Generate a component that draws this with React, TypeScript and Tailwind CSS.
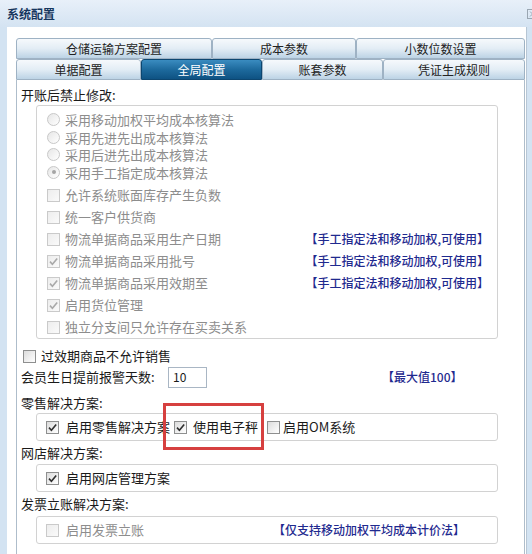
import React from "react";

function Check({ checked = false, disabled = false }: { checked?: boolean; disabled?: boolean }) {
  return (
    <span
      className={
        disabled
          ? "flex h-[13px] w-[13px] shrink-0 items-center justify-center border border-[#cacaca] bg-gradient-to-br from-[#ededed] to-[#fafafa]"
          : "flex h-[13px] w-[13px] shrink-0 items-center justify-center border border-[#8e8f8f] bg-gradient-to-br from-[#dcdcdc] to-white"
      }
    >
      {checked && (
        <svg width="11" height="11" viewBox="0 0 11 11">
          <path
            d="M2 5.6 L4.4 8.2 L9.2 2.4"
            fill="none"
            stroke={disabled ? "#a9a9a9" : "#2f2f2f"}
            strokeWidth="1.6"
          />
        </svg>
      )}
    </span>
  );
}

function Radio({ selected = false }: { selected?: boolean }) {
  return (
    <span className="flex h-[13px] w-[13px] shrink-0 items-center justify-center rounded-full border border-[#c8c8c8] bg-gradient-to-br from-[#e6e6e6] to-white">
      {selected && <span className="h-[4px] w-[4px] rounded-full bg-[#a5a5a5]" />}
    </span>
  );
}

function Tab({ label, w, active = false }: { label: string; w: string; active?: boolean }) {
  return (
    <div
      className={
        active
          ? `${w} flex h-full items-center justify-center rounded-t-[3px] border border-[#0c4670] bg-gradient-to-b from-[#3a8cc0] via-[#1d6a9d] to-[#0e5283] text-white`
          : `${w} flex h-full items-center justify-center rounded-t-[3px] border border-[#9eb2c4] bg-gradient-to-b from-[#f6f9fc] via-[#e3edf5] to-[#bcd3e5] text-[#222]`
      }
    >
      {label}
    </div>
  );
}

const NOTE = "【手工指定法和移动加权,可使用】";

export default function App() {
  const radios = [
    { t: "采用移动加权平均成本核算法", s: false },
    { t: "采用先进先出成本核算法", s: false },
    { t: "采用后进先出成本核算法", s: false },
    { t: "采用手工指定成本核算法", s: true },
  ];
  const checks = [
    { t: "允许系统账面库存产生负数", c: false, n: false },
    { t: "统一客户供货商", c: false, n: false },
    { t: "物流单据商品采用生产日期", c: false, n: true },
    { t: "物流单据商品采用批号", c: true, n: true },
    { t: "物流单据商品采用效期至", c: true, n: true },
    { t: "启用货位管理", c: true, n: false },
    { t: "独立分支间只允许存在买卖关系", c: false, n: false },
  ];

  return (
    <div className="relative h-[554px] w-[532px] overflow-hidden bg-[#d3e3f2] font-['Noto_Sans_CJK_SC','Noto_Sans',sans-serif] text-[13px] text-[#1a1a1a]">
      {/* title bar */}
      <div className="flex h-[27px] items-center bg-gradient-to-b from-[#e8f0f9] to-[#d4e3f2] pl-[7px]">
        <span className="text-[12px] font-bold leading-none text-[#17365d]">系统配置</span>
        <svg className="ml-auto mr-[-6px]" width="11" height="10" viewBox="0 0 11 10">
          <rect x="0.5" y="0.5" width="10" height="9" fill="none" stroke="#9aa6b2" />
          <path d="M3 2.5 L8 7.5 M8 2.5 L3 7.5" stroke="#9aa6b2" strokeWidth="1" />
        </svg>
      </div>

      {/* white panel */}
      <div className="ml-[7px] flex h-[527px] w-[520px] flex-col border-r border-[#b7c6d4] bg-white pl-[9px] pr-[1px] pt-[11px]">
        {/* tabs */}
        <div className="flex h-[21px] text-[12px] leading-none">
          <Tab label="仓储运输方案配置" w="w-[196px]" />
          <Tab label="成本参数" w="w-[144px]" />
          <Tab label="小数位数设置" w="w-[169px]" />
        </div>
        <div className="flex h-[21px] text-[12px] leading-none">
          <Tab label="单据配置" w="w-[125px]" />
          <Tab label="全局配置" w="w-[121px]" active />
          <Tab label="账套参数" w="w-[121px]" />
          <Tab label="凭证生成规则" w="w-[142px]" />
        </div>

        {/* content */}
        <div className="flex flex-1 flex-col border-l border-r border-[#aebdcb] pl-[4px]">
          <div className="mt-[6px] flex h-[18px] items-center">开账后禁止修改:</div>

          <div className="ml-[15px] mt-[1px] flex w-[462px] flex-col rounded-[3px] border border-[#d2d2d2] pl-[10px] pr-[8px] pt-[5px] text-[#8d8d8d]">
            {radios.map((r) => (
              <div key={r.t} className="flex h-[17.5px] items-center gap-[5px]">
                <Radio selected={r.s} />
                <span>{r.t}</span>
              </div>
            ))}
            <div className="mt-[3px]" />
            {checks.map((c) => (
              <div key={c.t} className="flex h-[22px] items-center gap-[5px]">
                <Check checked={c.c} disabled />
                <span>{c.t}</span>
                {c.n && <span className="ml-auto text-[12px] font-medium text-[#1f2a8f]">{NOTE}</span>}
              </div>
            ))}
          </div>

          <div className="mt-[7px] flex h-[20px] items-center gap-[5px] pl-[2px]">
            <Check />
            <span>过效期商品不允许销售</span>
          </div>

          <div className="flex h-[22px] items-center">
            <span className="w-[147px]">会员生日提前报警天数:</span>
            <div className="flex h-[21px] w-[39px] items-center border border-[#a9b6c4] pl-[4px] text-[12px]">10</div>
            <span className="ml-[175px] text-[12px] font-medium text-[#1f2a8f]">【最大值100】</span>
          </div>

          <div className="mt-[6px] flex h-[18px] items-center">零售解决方案:</div>
          <div className="ml-[15px] mt-[1px] flex h-[28px] w-[462px] items-center rounded-[3px] border border-[#d2d2d2] pl-[9px]">
            <div className="flex w-[128px] items-center gap-[7px] overflow-hidden whitespace-nowrap">
              <Check checked />
              <span>启用零售解决方案</span>
            </div>
            <div className="flex w-[93px] items-center gap-[6px] whitespace-nowrap">
              <Check checked />
              <span>使用电子秤</span>
            </div>
            <div className="flex items-center gap-[3px] whitespace-nowrap">
              <Check />
              <span>启用OM系统</span>
            </div>
          </div>

          <div className="mt-[3px] flex h-[18px] items-center">网店解决方案:</div>
          <div className="ml-[15px] mt-[2px] flex h-[28px] w-[462px] items-center gap-[7px] rounded-[3px] border border-[#d2d2d2] pl-[9px]">
            <Check checked />
            <span>启用网店管理方案</span>
          </div>

          <div className="mt-[3px] flex h-[18px] items-center">发票立账解决方案:</div>
          <div className="ml-[15px] mt-[3px] flex h-[28px] w-[462px] items-center rounded-[3px] border border-[#d2d2d2] pl-[9px]">
            <div className="flex w-[227px] items-center gap-[7px] text-[#8d8d8d]">
              <Check disabled />
              <span>启用发票立账</span>
            </div>
            <span className="text-[12px] font-medium text-[#1f2a8f]">【仅支持移动加权平均成本计价法】</span>
          </div>
        </div>
      </div>

      {/* red annotation highlight */}
      <div className="pointer-events-none absolute left-[163px] top-[403px] h-[47px] w-[101px] border-[3px] border-[#d6403f]" />
    </div>
  );
}
